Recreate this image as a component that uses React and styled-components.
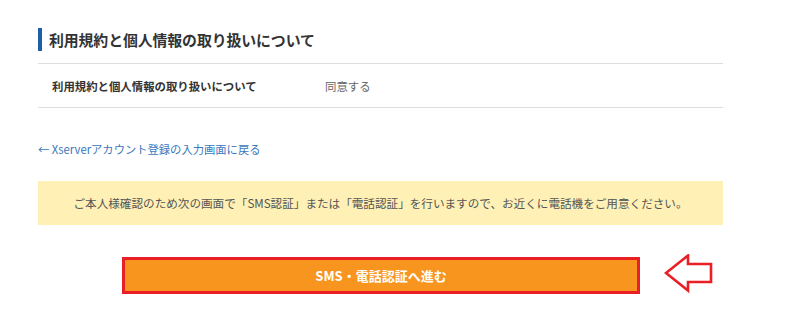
import React from 'react'
import styled, { createGlobalStyle } from 'styled-components'

const GlobalStyle = createGlobalStyle`
    body {
        margin: 0;
        background: #fff;
        font-family: "Noto Sans CJK JP", "Noto Sans", sans-serif;
        color: #333;
    }
`

const Page = styled.div`
    width: 685px;
    padding: 28px 0 0 38px;
`

const Heading = styled.h2`
    margin: 0;
    height: 23px;
    display: flex;
    align-items: center;
    border-left: 4px solid #1f5fa8;
    padding-left: 7px;
    font-size: 14.9px;
    font-weight: bold;
    color: #333;
    letter-spacing: -0.1px;
`

const Table = styled.div`
    margin-top: 12px;
    border-top: 1px solid #ddd;
    border-bottom: 1px solid #ddd;
`

const Row = styled.div`
    height: 43px;
    display: flex;
    align-items: center;
    font-size: 11.4px;
`

const Label = styled.div`
    width: 273px;
    padding-left: 14px;
    font-weight: bold;
    color: #333;
`

const Value = styled.div`
    color: #666;
`

const BackLink = styled.a`
    display: block;
    margin-top: 32px;
    font-size: 11.3px;
    color: #3a78bd;
    text-decoration: none;
    line-height: 18px;
`

const Notice = styled.div`
    margin-top: 23px;
    height: 44px;
    display: flex;
    align-items: center;
    justify-content: center;
    background: #fff0b6;
    color: #555;
    font-size: 11.6px;
`

const Actions = styled.div`
    position: relative;
    margin-top: 32px;
    display: flex;
    justify-content: center;
`

const Button = styled.button`
    width: 518px;
    height: 37px;
    margin-left: 1px;
    background: #f7951f;
    border: 3px solid #ea1f26;
    color: #fff;
    font-family: inherit;
    font-size: 13px;
    font-weight: bold;
`

const Pointer = styled.svg`
    position: absolute;
    left: 626px;
    top: -3px;
`

export default function App() {
    return (
        <Page>
            <GlobalStyle/>
            <Heading>利用規約と個人情報の取り扱いについて</Heading>
            <Table>
                <Row>
                    <Label>利用規約と個人情報の取り扱いについて</Label>
                    <Value>同意する</Value>
                </Row>
            </Table>
            <BackLink href="#">← Xserverアカウント登録の入力画面に戻る</BackLink>
            <Notice>ご本人様確認のため次の画面で「SMS認証」または「電話認証」を行いますので、お近くに電話機をご用意ください。</Notice>
            <Actions>
                <Button>SMS・電話認証へ進む</Button>
                <Pointer width="50" height="40" viewBox="0 0 50 40">
                    <polygon points="2,19 24,1.5 24,10 47,10 47,28 24,28 24,36.5" fill="none" stroke="#ea1f26" strokeWidth="2.6" strokeLinejoin="miter"/>
                </Pointer>
            </Actions>
        </Page>
    )
}
